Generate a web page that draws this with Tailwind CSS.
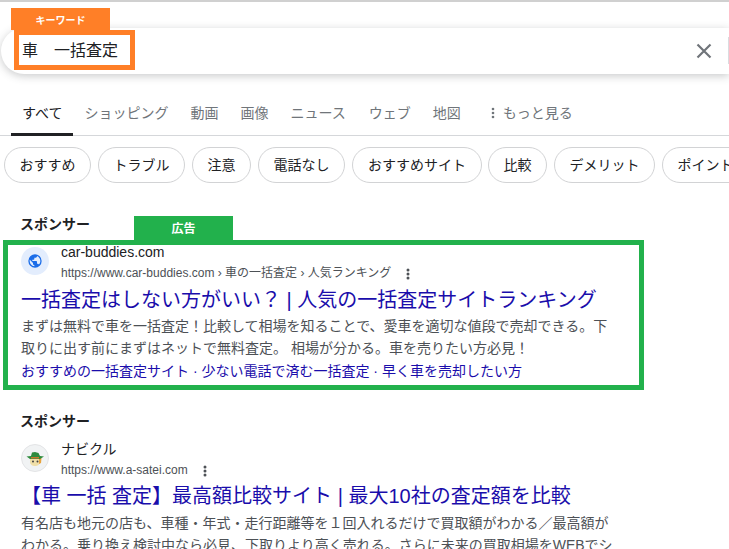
<!DOCTYPE html>
<html lang="ja">
<head>
    <meta charset="UTF-8">
    <title>車 一括査定</title>
    <script src="https://cdn.jsdelivr.net/npm/@tailwindcss/browser@4"></script>
</head>
<body class="bg-white h-[549px] w-[729px] overflow-hidden font-['Liberation_Sans','Noto_Sans_CJK_JP',sans-serif] text-[#202124]">
    <div class="border-t-2 border-[#d0d0d0] pt-[26px]">
        <!-- search box -->
        <div class="relative h-[46px] ml-px rounded-l-[23px] bg-white shadow-[0_2px_8px_rgba(60,64,67,0.28)] flex items-center pl-[21px]">
            <span class="text-base leading-none">車　一括査定</span>
            <svg class="absolute left-[695px] top-[15px] w-4 h-4" viewBox="0 0 16 16" fill="none" stroke="#70757a" stroke-width="2.2"><path d="M1.5 1.5 14.5 14.5M14.5 1.5 1.5 14.5"/></svg>
            <div class="absolute right-0 top-[9px] w-px h-[27px] bg-[#dadce0]"></div>
            <div class="absolute left-[13px] top-[2px] w-[121px] h-[40px] border-[5px] border-[#ff7f27]"></div>
            <div class="absolute left-[10px] top-[-20px] w-[99px] h-[22px] bg-[#ff7f27] text-white text-[10px] font-bold flex items-center justify-center pt-[3px]">キーワード</div>
        </div>

        <!-- tabs -->
        <div class="mt-[26px] h-[36px] border-b border-[#d5d7da] flex gap-[22px] pl-[22px] text-sm text-[#70757a] leading-[26px]">
            <div class="relative text-[#202124]">すべて<div class="absolute left-[-11px] right-[-11px] bottom-[-1px] h-[3px] bg-[#202124]"></div></div>
            <div>ショッピング</div>
            <div>動画</div>
            <div>画像</div>
            <div>ニュース</div>
            <div class="ml-px">ウェブ</div>
            <div>地図</div>
            <div class="flex items-start ml-[3px]">
                <svg class="w-[10px] h-[26px]" viewBox="0 0 10 26" fill="#70757a"><circle cx="7" cy="9" r="1.3"/><circle cx="7" cy="13" r="1.3"/><circle cx="7" cy="17" r="1.3"/></svg>
                <span class="ml-[7px]">もっと見る</span>
            </div>
        </div>

        <!-- chips -->
        <div class="mt-[11px] flex gap-[7px] pl-1 w-[800px] text-sm leading-none">
            <div class="h-9 rounded-full border border-[#d2d3d5] w-[87px] flex items-center justify-center">おすすめ</div>
            <div class="h-9 rounded-full border border-[#d2d3d5] w-[87px] flex items-center justify-center">トラブル</div>
            <div class="h-9 rounded-full border border-[#d2d3d5] w-[59px] flex items-center justify-center">注意</div>
            <div class="h-9 rounded-full border border-[#d2d3d5] w-[87px] flex items-center justify-center">電話なし</div>
            <div class="h-9 rounded-full border border-[#d2d3d5] w-[130px] flex items-center justify-center">おすすめサイト</div>
            <div class="h-9 rounded-full border border-[#d2d3d5] w-[59px] -ml-px flex items-center justify-center">比較</div>
            <div class="h-9 rounded-full border border-[#d2d3d5] w-[101px] flex items-center justify-center">デメリット</div>
            <div class="h-9 rounded-full border border-[#d2d3d5] w-[87px] flex items-center justify-center">ポイント</div>
        </div>

        <!-- first ad -->
        <div class="relative mt-[31px] pl-[20px] h-[20px] text-sm font-bold leading-5">スポンサー
            <div class="absolute left-[134px] top-[2px] w-[99px] h-[24px] pt-px bg-[#22b14c] text-white text-xs flex items-center justify-center">広告</div>
        </div>
        <div class="ml-[3px] mt-[6px] w-[641px] h-[150px] border-[5px] border-[#22b14c] pl-[13px]">
            <div class="flex gap-3 h-[32px]">
                <div class="mt-[2px] w-7 h-7 rounded-full bg-[#e3edfd] flex items-center justify-center">
                    <svg class="w-4 h-4" viewBox="0 0 24 24" fill="#1a6ce8"><path d="M12 2a10 10 0 1 0 0 20 10 10 0 0 0 0-20zM4 12c0-.6.1-1.2.2-1.8L9 15v1c0 1.1.9 2 2 2v2c-3.9-.5-7-3.900-7-8zm13.900 5.400c-.3-.8-1-1.400-1.900-1.400h-1v-3c0-.6-.4-1-1-1H8v-2h2c.6 0 1-.4 1-1V7h2c1.100 0 2-.9 2-2v-.4c2.900 1.200 5 4.100 5 7.400 0 2.100-.8 4-2.100 5.400z"/></svg>
                </div>
                <div>
                    <div class="text-sm leading-[14px]">car-buddies.com</div>
                    <div class="mt-[5px] flex items-center text-xs leading-[19px] text-[#4d5156]">https://www.car-buddies.com › 車の一括査定 › 人気ランキング
                        <svg class="ml-[15px] w-[4px] h-[14px]" viewBox="0 0 4 14" fill="#4d5156"><circle cx="2" cy="3" r="1.500"/><circle cx="2" cy="7" r="1.500"/><circle cx="2" cy="11" r="1.500"/></svg>
                    </div>
                </div>
            </div>
            <div class="mt-[10px] text-xl leading-[26px] text-[#1a0dab]">一括査定はしない方がいい？ | 人気の一括査定サイトランキング</div>
            <div class="mt-[2px] text-sm leading-[22px] text-[#4d5156] w-[600px]">まずは無料で車を一括査定！比較して相場を知ることで、愛車を適切な値段で売却できる。下取りに出す前にまずはネットで無料査定。 相場が分かる。車を売りたい方必見！</div>
            <div class="mt-px text-sm leading-[22px] text-[#1a0dab]">おすすめの一括査定サイト · 少ない電話で済む一括査定 · 早く車を売却したい方</div>
        </div>

        <!-- second ad -->
        <div class="mt-[21px] pl-[20px] h-[20px] text-sm font-bold leading-5">スポンサー</div>
        <div class="pl-[21px] mt-[11px] flex gap-3 h-[32px]">
            <div class="mt-[2px] w-7 h-7 rounded-full bg-[#f1f3f4] border border-[#e3e4e6] flex items-center justify-center">
                <svg class="w-5 h-5" viewBox="0 0 20 20"><path d="M5 11c0-2 10-2 10 0v3c0 2.500-2.500 4-5 4s-5-1.500-5-4z" fill="#f0dfa8"/><path d="M14 10h2.500l-.5 5-2 1z" fill="#e8a33c"/><path d="M1.500 8.500 6 8l1-3.500 3-.5 3.500 1L15 8l4 .5-4 2.500H5z" fill="#2e8b3d"/><rect x="6" y="9" width="8" height="1.500" fill="#c9772b"/><circle cx="8" cy="13.500" r="1" fill="#444"/><circle cx="12.500" cy="13.500" r="1" fill="#444"/></svg>
            </div>
            <div>
                <div class="text-sm leading-[14px]">ナビクル</div>
                <div class="mt-[5px] flex items-center text-xs leading-[19px] text-[#4d5156]">https://www.a-satei.com
                    <svg class="ml-[15px] w-[4px] h-[14px]" viewBox="0 0 4 14" fill="#4d5156"><circle cx="2" cy="3" r="1.500"/><circle cx="2" cy="7" r="1.500"/><circle cx="2" cy="11" r="1.500"/></svg>
                </div>
            </div>
        </div>
        <div class="pl-[21px] mt-[9px] text-xl leading-[26px] text-[#1a0dab]">【車 一括 査定】最高額比較サイト | 最大10社の査定額を比較</div>
        <div class="ml-[21px] mt-[3px] text-sm leading-[22px] text-[#4d5156] w-[595px]">有名店も地元の店も、車種・年式・走行距離等を１回入れるだけで買取額がわかる／最高額がわかる。乗り換え検討中なら必見、下取りより高く売れる。さらに未来の買取相場をWEBでシ</div>
    </div>
</body>
</html>
